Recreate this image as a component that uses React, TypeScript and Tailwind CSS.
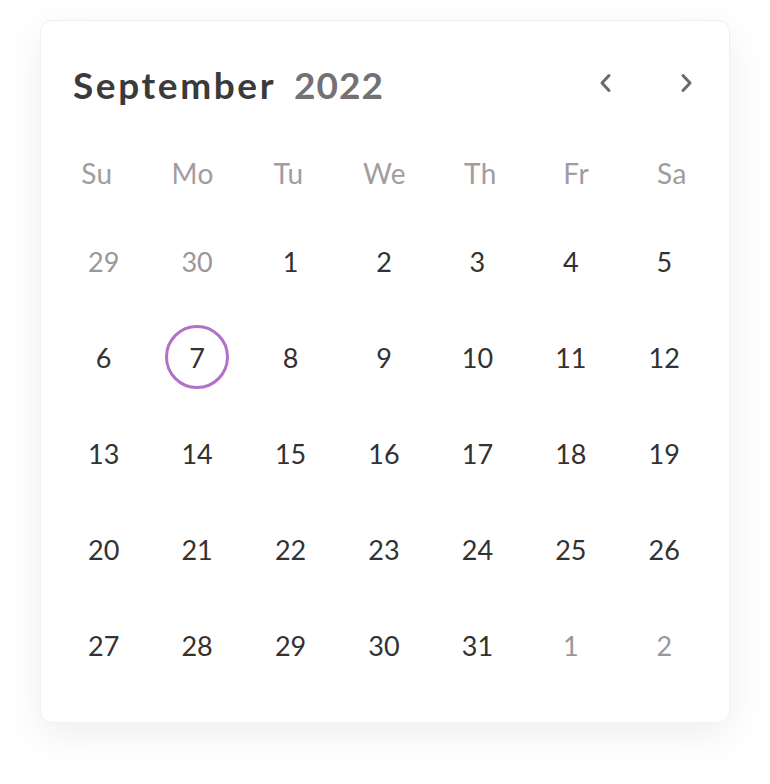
import React from "react";

const weekdays = ["Su", "Mo", "Tu", "We", "Th", "Fr", "Sa"];
type Day = { n: number; muted?: boolean; selected?: boolean };
const rows: Day[][] = [
  [{ n: 29, muted: true }, { n: 30, muted: true }, { n: 1 }, { n: 2 }, { n: 3 }, { n: 4 }, { n: 5 }],
  [{ n: 6 }, { n: 7, selected: true }, { n: 8 }, { n: 9 }, { n: 10 }, { n: 11 }, { n: 12 }],
  [{ n: 13 }, { n: 14 }, { n: 15 }, { n: 16 }, { n: 17 }, { n: 18 }, { n: 19 }],
  [{ n: 20 }, { n: 21 }, { n: 22 }, { n: 23 }, { n: 24 }, { n: 25 }, { n: 26 }],
  [{ n: 27 }, { n: 28 }, { n: 29 }, { n: 30 }, { n: 31 }, { n: 1, muted: true }, { n: 2, muted: true }],
];

export default function App() {
  return (
    <div className="w-[770px] h-[784px] bg-white pt-5 pl-10" style={{ fontFamily: "Lato, 'Noto Sans', sans-serif" }}>
      <div className="w-[690px] h-[703px] bg-white rounded-xl border border-[#f0f0f0] shadow-[0_12px_40px_rgba(0,0,0,0.07)]">
        <div className="flex items-center justify-between pl-8 pr-[34px] pt-[40px] h-[86px]">
          <div className="flex items-baseline gap-[18px] text-[37px] font-bold leading-none">
            <span className="text-[#3b3a3b] tracking-[2.6px]">September</span>
            <span className="text-[#757073] tracking-[1px]">2022</span>
          </div>
          <div className="flex items-center gap-[62px] text-[#6e686b] -mt-[2px]">
            <svg width="18" height="22" viewBox="0 0 18 22" fill="none" stroke="currentColor" strokeWidth="3" strokeLinecap="round" strokeLinejoin="round">
              <path d="M12 3.5 L5 11 L12 18.5" />
            </svg>
            <svg width="18" height="22" viewBox="0 0 18 22" fill="none" stroke="currentColor" strokeWidth="3" strokeLinecap="round" strokeLinejoin="round">
              <path d="M6 3.5 L13 11 L6 18.5" />
            </svg>
          </div>
        </div>
        <div className="grid grid-cols-7 pl-2 pr-[9px] mt-[51px] h-[55px] items-start">
          {weekdays.map((w) => (
            <div key={w} className="text-center text-[28px] leading-none text-[#a29c9e] pt-[1px] tracking-[0.5px]">{w}</div>
          ))}
        </div>
        <div className="pl-4 pr-[18px]">
          {rows.map((r, i) => (
            <div key={i} className="grid grid-cols-7 h-[96px]">
              {r.map((d, j) => (
                <div key={j} className="flex items-center justify-center">
                  <div
                    className={
                      "w-16 h-16 rounded-full flex items-center justify-center text-[27px] leading-none " +
                      (d.selected ? "border-[3px] border-[#b46fc8] " : "") +
                      (d.muted ? "text-[#9c9698]" : "text-[#333233]")
                    }
                  >
                    {d.n}
                  </div>
                </div>
              ))}
            </div>
          ))}
        </div>
      </div>
    </div>
  );
}
